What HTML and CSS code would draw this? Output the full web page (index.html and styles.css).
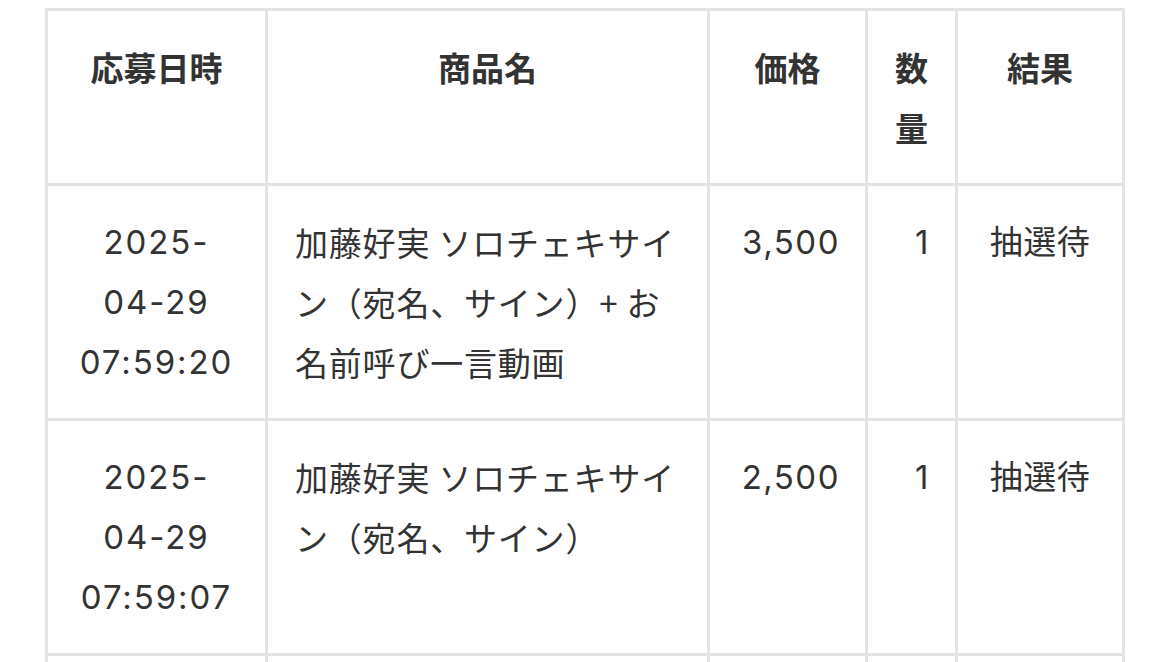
FILE: index.html
```html
<!DOCTYPE html>
<html lang="ja">
<head>
<meta charset="utf-8">
<link rel="stylesheet" href="styles.css">
</head>
<body>
<table class="history">
  <colgroup>
    <col class="c-date"><col class="c-name"><col class="c-price"><col class="c-qty"><col class="c-result">
  </colgroup>
  <thead>
    <tr>
      <th>応募日時</th>
      <th>商品名</th>
      <th>価格</th>
      <th>数量</th>
      <th>結果</th>
    </tr>
  </thead>
  <tbody>
    <tr>
      <td class="date">2025-04-29 07:59:20</td>
      <td class="name">加藤好実 ソロチェキサイン（宛名、サイン）+ お名前呼び一言動画</td>
      <td class="num">3,500</td>
      <td class="num">1</td>
      <td class="result">抽選待</td>
    </tr>
    <tr>
      <td class="date">2025-04-29 07:59:07</td>
      <td class="name">加藤好実 ソロチェキサイン（宛名、サイン）</td>
      <td class="num">2,500</td>
      <td class="num">1</td>
      <td class="result">抽選待</td>
    </tr>
    <tr>
      <td class="date">2025-04-29 07:58:41</td>
      <td class="name">加藤好実 ソロチェキサイン（宛名、サイン）</td>
      <td class="num">2,500</td>
      <td class="num">1</td>
      <td class="result">抽選待</td>
    </tr>
  </tbody>
</table>
</body>
</html>
```
FILE: styles.css
```css
html, body {
  margin: 0;
  padding: 0;
  background: #ffffff;
}
body {
  padding: 8px 0 0 45px;
  font-family: "Inter", "Noto Sans CJK JP", sans-serif;
  color: #333333;
  font-size: 33px;
}
.history {
  border-collapse: collapse;
  table-layout: fixed;
  width: 1080px;
}
.c-date { width: 220px; }
.c-name { width: 442px; }
.c-price { width: 158px; }
.c-qty { width: 90px; }
.c-result { width: 167px; }
.history th,
.history td {
  border: 3px solid #e1e3e7;
  padding: 26px 27px;
  line-height: 60px;
  vertical-align: top;
  word-break: normal;
}
.history th {
  font-weight: 700;
  text-align: center;
  font-family: "Noto Sans CJK JP", sans-serif;
}
.history td {
  font-weight: 400;
}
.history td.date {
  text-align: center;
  letter-spacing: 1.9px;
}
.history td.name {
  text-align: left;
  font-family: "Noto Sans CJK JP", sans-serif;
  letter-spacing: 0.8px;
}
.history td.num {
  text-align: right;
  letter-spacing: 1.5px;
  padding-right: 25px;
}
.history td.result {
  text-align: center;
  letter-spacing: 0.5px;
}
```
